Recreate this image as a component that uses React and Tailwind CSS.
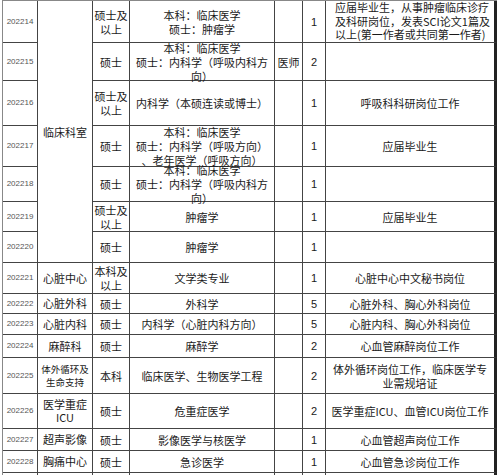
import React from 'react';

const ROWS = [
  { id: '202214', degree: ['硕士及', '以上'], major: ['本科：临床医学', '硕士：肿瘤学'], post: '', count: '1', notes: ['应届毕业生，从事肿瘤临床诊疗', '及科研岗位，发表SCI论文1篇及', '以上(第一作者或共同第一作者)'], notesLeft: true },
  { id: '202215', degree: ['硕士'], major: ['本科：临床医学', '硕士：内科学（呼吸内科方', '向）'], post: '医师', count: '2', notes: [] },
  { id: '202216', degree: ['硕士及', '以上'], major: ['内科学（本硕连读或博士）'], post: '', count: '1', notes: ['呼吸科科研岗位工作'] },
  { id: '202217', degree: ['硕士'], major: ['本科：临床医学', '硕士：内科学（呼吸方向）', '、老年医学（呼吸方向）'], post: '', count: '1', notes: ['应届毕业生'] },
  { id: '202218', degree: ['硕士'], major: ['本科：临床医学', '硕士：内科学（呼吸内科方', '向）'], post: '', count: '1', notes: [] },
  { id: '202219', degree: ['硕士及', '以上'], major: ['肿瘤学'], post: '', count: '1', notes: ['应届毕业生'] },
  { id: '202220', degree: ['硕士'], major: ['肿瘤学'], post: '', count: '1', notes: [] },
  { id: '202221', dept: ['心脏中心'], degree: ['本科及', '以上'], major: ['文学类专业'], post: '', count: '1', notes: ['心脏中心中文秘书岗位'] },
  { id: '202222', dept: ['心脏外科'], degree: ['硕士'], major: ['外科学'], post: '', count: '5', notes: ['心脏外科、胸心外科岗位'] },
  { id: '202223', dept: ['心脏内科'], degree: ['硕士'], major: ['内科学（心脏内科方向）'], post: '', count: '5', notes: ['心脏内科、胸心外科岗位'] },
  { id: '202224', dept: ['麻醉科'], degree: ['硕士'], major: ['麻醉学'], post: '', count: '2', notes: ['心血管麻醉岗位工作'] },
  { id: '202225', dept: ['体外循环及', '生命支持'], deptSmall: true, degree: ['本科'], major: ['临床医学、生物医学工程'], post: '', count: '2', notes: ['体外循环岗位工作，临床医学专', '业需规培证'] },
  { id: '202226', dept: ['医学重症', 'ICU'], degree: ['硕士'], major: ['危重症医学'], post: '', count: '2', notes: ['医学重症ICU、血管ICU岗位工作'] },
  { id: '202227', dept: ['超声影像'], degree: ['硕士'], major: ['影像医学与核医学'], post: '', count: '1', notes: ['心血管超声岗位工作'] },
  { id: '202228', dept: ['胸痛中心'], degree: ['硕士'], major: ['急诊医学'], post: '', count: '1', notes: ['心血管急诊岗位工作'] },
  { id: '', dept: [''], degree: [''], major: [''], post: '', count: '', notes: [] },
];

const cell = 'flex items-center justify-center text-center border-r border-b border-[#444] whitespace-nowrap';

function Lines({ lines }) {
  return (
    <div>
      {lines.map((l, i) => (
        <div key={i}>{l}</div>
      ))}
    </div>
  );
}

export default function App() {
  return (
    <div className="w-[500px] h-[475px] overflow-hidden bg-white pl-[2px] font-['Noto_Sans_CJK_SC',sans-serif] text-[11px] leading-[14px] text-[#1a1a1a]">
      <div className="grid grid-cols-[35px_55px_37px_145px_28px_23px_171px] grid-rows-[42px_38px_45px_41px_35px_30px_31px_31px_20px_21px_23px_36px_35px_22px_22px_30px] border-l border-t border-[#888] w-[495px]">
        {ROWS.map((r, i) => (
          <React.Fragment key={i}>
            <div className={`${cell} font-['Liberation_Sans',sans-serif] text-[8px] text-[#555]`}>{r.id}</div>
            {i === 0 && (
              <div className={`${cell} row-span-7`}>临床科室</div>
            )}
            {r.dept && (
              <div className={`${cell} ${r.deptSmall ? 'text-[9.5px] leading-[13px]' : 'leading-[13px]'}`}>
                <Lines lines={r.dept} />
              </div>
            )}
            <div className={cell}>
              <Lines lines={r.degree} />
            </div>
            <div className={cell}>
              <Lines lines={r.major} />
            </div>
            <div className={cell}>{r.post}</div>
            <div className={`${cell} font-['Liberation_Sans',sans-serif] text-[11px]`}>{r.count}</div>
            <div className={`${cell} border-r-[3px] border-r-[#222] ${r.notesLeft ? 'justify-start text-left pl-[9px] leading-[13.5px]' : ''}`}>
              <Lines lines={r.notes} />
            </div>
          </React.Fragment>
        ))}
      </div>
    </div>
  );
}
